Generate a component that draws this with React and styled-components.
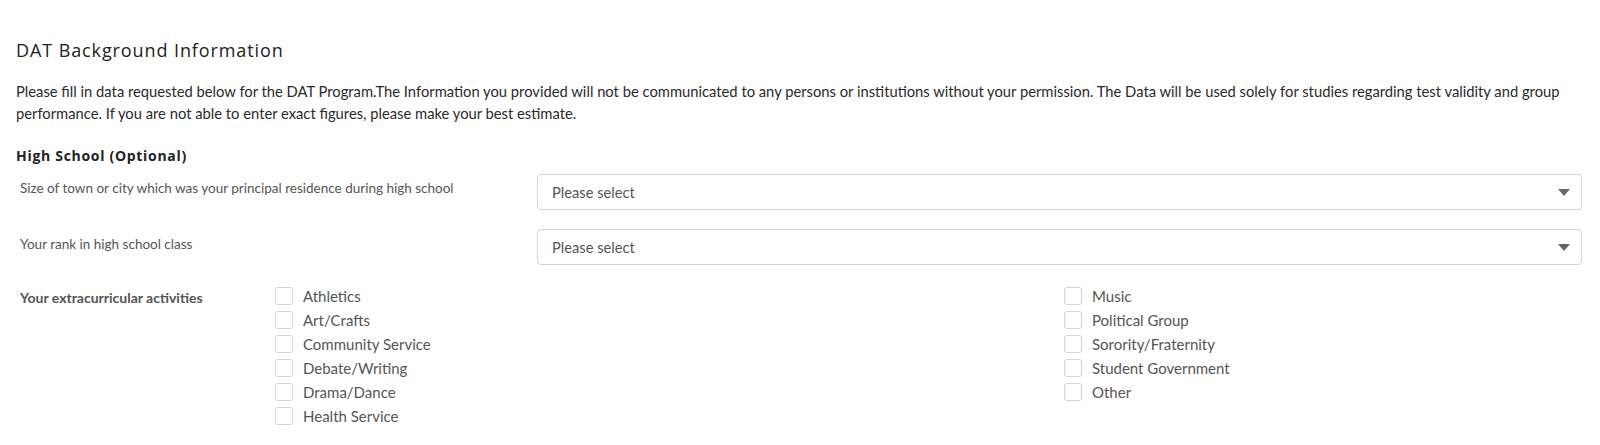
import React from 'react';
import styled, { createGlobalStyle } from 'styled-components';

const GlobalStyle = createGlobalStyle`
  * { box-sizing: border-box; }
  body {
    margin: 0;
    background: #fff;
    font-family: Lato, "Open Sans", sans-serif;
    color: #333;
  }
`;

const Page = styled.div`
  padding: 38px 18px 20px 16px;
`;

const Title = styled.h2`
  margin: 0 0 18px;
  font-family: "Open Sans", Lato, sans-serif;
  font-size: 18px;
  font-weight: 500;
  line-height: 24px;
  color: #222;
  letter-spacing: 0.9px;
`;

const Intro = styled.p`
  margin: 0 0 22px;
  font-size: 14.75px;
  line-height: 22px;
  color: #2a2a2a;
`;

const SectionTitle = styled.h3`
  margin: 0 0 8px;
  font-family: "Open Sans", Lato, sans-serif;
  font-size: 14px;
  font-weight: 700;
  line-height: 20px;
  color: #222;
  letter-spacing: 0.7px;
`;

const Fields = styled.div`
  display: flex;
  flex-direction: column;
  gap: 19px;
`;

const FieldRow = styled.div`
  display: grid;
  grid-template-columns: 521px 1fr;
  align-items: start;
`;

const Label = styled.label`
  padding: ${p => (p.$offset ? p.$offset : '4px')} 0 0 4px;
  font-size: ${p => (p.$bold ? '14px' : '13.5px')};
  line-height: 18px;
  font-weight: ${p => (p.$bold ? 700 : 400)};
  color: #555;
`;

const SelectBox = styled.div`
  height: 36px;
  border: 1px solid #d4d4d4;
  border-radius: 4px;
  display: flex;
  align-items: center;
  padding: 0 14px;
  font-size: 14.7px;
  color: #555;
  background: #fff;
`;

const Caret = styled.span`
  margin-left: auto;
  width: 0;
  height: 0;
  border-left: 6px solid transparent;
  border-right: 6px solid transparent;
  border-top: 7px solid #666;
  margin-right: -3px;
`;

const ActivityRow = styled.div`
  display: grid;
  grid-template-columns: 259px 789px 1fr;
  align-items: start;
  margin-top: 3px;
`;

const CheckList = styled.div`
  display: flex;
  flex-direction: column;
  gap: 6px;
`;

const CheckItem = styled.label`
  display: flex;
  align-items: center;
  gap: 10px;
  font-size: 15px;
  line-height: 18px;
  color: #555;
`;

const Box = styled.span`
  width: 18px;
  height: 18px;
  border: 1px solid #d4d4d4;
  border-radius: 3px;
  background: #fff;
  flex: none;
`;

const Select = ({ placeholder }) => (
  <SelectBox>
    {placeholder}
    <Caret />
  </SelectBox>
);

const leftActivities = ['Athletics', 'Art/Crafts', 'Community Service', 'Debate/Writing', 'Drama/Dance', 'Health Service'];
const rightActivities = ['Music', 'Political Group', 'Sorority/Fraternity', 'Student Government', 'Other'];

export default function App() {
  return (
    <>
      <GlobalStyle />
      <Page>
        <Title>DAT Background Information</Title>
        <Intro>
          Please fill in data requested below for the DAT Program.The Information you provided will not be communicated to any persons or institutions without your permission. The Data will be used solely for studies regarding test validity and group performance. If you are not able to enter exact figures, please make your best estimate.
        </Intro>

        <SectionTitle>High School (Optional)</SectionTitle>
        <Fields>
          <FieldRow>
            <Label $offset="5px">Size of town or city which was your principal residence during high school</Label>
            <Select placeholder="Please select" />
          </FieldRow>
          <FieldRow>
            <Label $offset="6px">Your rank in high school class</Label>
            <Select placeholder="Please select" />
          </FieldRow>

          <ActivityRow>
            <Label $bold $offset="2px">Your extracurricular activities</Label>
            <CheckList>
              {leftActivities.map(a => (
                <CheckItem key={a}><Box />{a}</CheckItem>
              ))}
            </CheckList>
            <CheckList>
              {rightActivities.map(a => (
                <CheckItem key={a}><Box />{a}</CheckItem>
              ))}
            </CheckList>
          </ActivityRow>
        </Fields>
      </Page>
    </>
  );
}
